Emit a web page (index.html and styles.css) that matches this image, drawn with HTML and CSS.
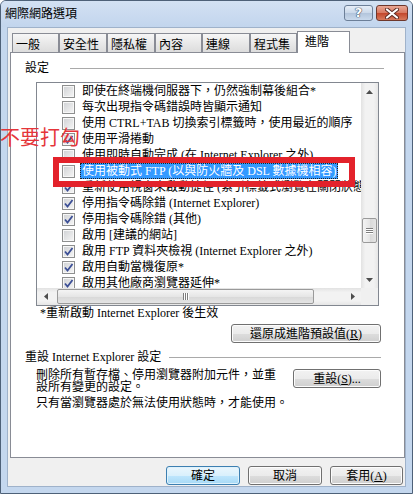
FILE: index.html
```html
<!DOCTYPE html>
<html lang="zh-Hant">
<head>
  <meta charset="UTF-8">
  <title>網際網路選項</title>
  <link rel="stylesheet" href="styles.css">
</head>
<body>

<div class="window">
  <div class="titlebar">
    <span class="title">網際網路選項</span>
    <div class="caption">
      <span class="cap help">?</span>
      <span class="cap close">
        <svg width="14" height="11" viewBox="0 0 14 11"><path d="M2 1.5 L12 9.5 M12 1.5 L2 9.5" stroke="#5a2a22" stroke-width="4" stroke-linecap="round"/><path d="M2 1.5 L12 9.5 M12 1.5 L2 9.5" stroke="#fff" stroke-width="2.2" stroke-linecap="round"/></svg>
      </span>
    </div>
  </div>

  <div class="client">
    <div class="tabs">
      <span class="tab t1">一般</span>
      <span class="tab t2">安全性</span>
      <span class="tab t3">隱私權</span>
      <span class="tab t4">內容</span>
      <span class="tab t5">連線</span>
      <span class="tab t6">程式集</span>
      <span class="tab active">進階</span>
    </div>

    <div class="panel">
      <div class="group first"><span>設定</span><i class="rule"></i></div>

      <div class="listbox">
        <div class="list-top">
          <div class="rows">
            <div class="row"><span class="cb"></span><span class="lbl">即使在終端機伺服器下，仍然強制幕後組合*</span></div>
            <div class="row"><span class="cb"></span><span class="lbl">每次出現指令碼錯誤時皆顯示通知</span></div>
            <div class="row"><span class="cb"></span><span class="lbl">使用 CTRL+TAB 切換索引標籤時，使用最近的順序</span></div>
            <div class="row"><span class="cb on"><svg width="11" height="11" viewBox="0 0 11 11"><path d="M2 5.5 L4.5 8.5 L9.5 2" fill="none" stroke="#3c4f96" stroke-width="1.8"/></svg></span><span class="lbl">使用平滑捲動</span></div>
            <div class="row"><span class="cb"></span><span class="lbl">使用即時自動完成 (在 Internet Explorer 之外)</span></div>
            <div class="row"><span class="cb"></span><span class="lbl selected">使用被動式 FTP (以與防火牆及 DSL 數據機相容)</span></div>
            <div class="row"><span class="cb on"><svg width="11" height="11" viewBox="0 0 11 11"><path d="M2 5.5 L4.5 8.5 L9.5 2" fill="none" stroke="#3c4f96" stroke-width="1.8"/></svg></span><span class="lbl">重新使用視窗來啟動捷徑 (索引標籤式瀏覽在關閉狀態時)</span></div>
            <div class="row"><span class="cb on"><svg width="11" height="11" viewBox="0 0 11 11"><path d="M2 5.5 L4.5 8.5 L9.5 2" fill="none" stroke="#3c4f96" stroke-width="1.8"/></svg></span><span class="lbl">停用指令碼除錯 (Internet Explorer)</span></div>
            <div class="row"><span class="cb on"><svg width="11" height="11" viewBox="0 0 11 11"><path d="M2 5.5 L4.5 8.5 L9.5 2" fill="none" stroke="#3c4f96" stroke-width="1.8"/></svg></span><span class="lbl">停用指令碼除錯 (其他)</span></div>
            <div class="row"><span class="cb"></span><span class="lbl">啟用 [建議的網站]</span></div>
            <div class="row"><span class="cb on"><svg width="11" height="11" viewBox="0 0 11 11"><path d="M2 5.5 L4.5 8.5 L9.5 2" fill="none" stroke="#3c4f96" stroke-width="1.8"/></svg></span><span class="lbl">啟用 FTP 資料夾檢視 (Internet Explorer 之外)</span></div>
            <div class="row"><span class="cb on"><svg width="11" height="11" viewBox="0 0 11 11"><path d="M2 5.5 L4.5 8.5 L9.5 2" fill="none" stroke="#3c4f96" stroke-width="1.8"/></svg></span><span class="lbl">啟用自動當機復原*</span></div>
            <div class="row"><span class="cb on"><svg width="11" height="11" viewBox="0 0 11 11"><path d="M2 5.5 L4.5 8.5 L9.5 2" fill="none" stroke="#3c4f96" stroke-width="1.8"/></svg></span><span class="lbl">啟用其他廠商瀏覽器延伸*</span></div>
          </div>
          <div class="vscroll">
            <span class="arrow"><svg width="7" height="4" viewBox="0 0 7 4"><path d="M0 4 L3.5 0 L7 4 Z" fill="#4d4d4d"/></svg></span>
            <div class="vtrack">
              <div class="vthumb"><i></i><i></i><i></i></div>
            </div>
            <span class="arrow"><svg width="7" height="4" viewBox="0 0 7 4"><path d="M0 0 L7 0 L3.5 4 Z" fill="#4d4d4d"/></svg></span>
          </div>
        </div>
        <div class="list-bottom">
          <div class="hscroll">
            <span class="arrow"><svg width="4" height="7" viewBox="0 0 4 7"><path d="M4 0 L4 7 L0 3.5 Z" fill="#4d4d4d"/></svg></span>
            <div class="htrack">
              <div class="hthumb"><i></i><i></i><i></i></div>
            </div>
            <span class="arrow"><svg width="4" height="7" viewBox="0 0 4 7"><path d="M0 0 L4 3.5 L0 7 Z" fill="#4d4d4d"/></svg></span>
          </div>
          <span class="corner"></span>
        </div>
      </div>

      <p class="note">*重新啟動 Internet Explorer 後生效</p>
      <div class="btn-row"><button class="btn restore">還原成進階預設值(<u>R</u>)</button></div>

      <div class="group second"><span>重設 Internet Explorer 設定</span><i class="rule"></i></div>
      <div class="reset-row">
        <p class="desc">刪除所有暫存檔、停用瀏覽器附加元件，並重<br>設所有變更的設定。</p>
        <button class="btn reset">重設(<u>S</u>)...</button>
      </div>
      <p class="hint">只有當瀏覽器處於無法使用狀態時，才能使用。</p>
    </div>

    <div class="footer">
      <button class="btn default">確定</button>
      <button class="btn">取消</button>
      <button class="btn apply">套用(<u>A</u>)</button>
    </div>
  </div>

  <div class="annot">不要打勾</div>
  <div class="redbox"></div>
</div>

</body>
</html>
```

FILE: styles.css
```css
* { box-sizing: border-box; }
body { margin: 0; background: #fff; color: #000; font: 12px/14px "Liberation Serif", "Noto Sans CJK TC", serif; }
p { margin: 0; }

.window { position: relative; width: 413px; height: 494px; border: 1px solid #4e6178; border-radius: 6px 6px 0 0; background: #c4d7ee; padding: 0 6px 6px; display: flex; flex-direction: column; }

.titlebar { height: 26px; margin: 0 -6px; padding: 0 4px 0 4px; display: flex; justify-content: space-between; align-items: flex-start; background: linear-gradient(#d3e1f3, #c2d5ed); border-radius: 5px 5px 0 0; }
.title { padding-top: 5px; font-family: "Noto Sans CJK TC", sans-serif; }
.caption { display: flex; gap: 3px; margin-top: 4px; }
.cap { height: 16px; border-radius: 3px; display: flex; align-items: center; justify-content: center; }
.help { width: 29px; border: 1px solid #6c7f98; background: linear-gradient(#e6eef8, #cbd9ea 48%, #b3c5dc 52%, #c9d9ec); color: #fff; font: bold 13px/14px "DejaVu Sans", sans-serif; text-shadow: 0 0 1px #394a63, 0 0 1px #394a63, 0 0 1px #394a63; }
.close { width: 32px; border: 1px solid #6e372c; background: linear-gradient(#e9a795, #d87a62 48%, #c3472c 52%, #d77a5c); }

.client { flex: 1; background: #f0f0f0; border: 1px solid #9fb2ca; display: flex; flex-direction: column; }

.tabs { display: flex; align-items: flex-end; height: 21px; margin-top: 3px; padding-left: 4px; }
.tab { height: 19px; padding: 3px 0 0 3px; border: 1px solid #898c95; border-bottom: none; background: linear-gradient(#f6f6f6, #e9e9e9 50%, #dcdcdc); font-family: "Noto Sans CJK TC", sans-serif; line-height: 14px; }
.t1 { width: 47px; }
.t2 { width: 48px; }
.t3 { width: 48px; }
.t4 { width: 47px; }
.t5 { width: 48px; }
.t6 { width: 47px; }
.tab.active { position: relative; z-index: 1; width: 53px; height: 22px; margin-bottom: -1px; padding: 2px 0 0 7px; background: #fff; }

.panel { height: 406px; margin-left: 2px; border: 1px solid #898c95; background: #fff; }

.group { display: flex; align-items: center; padding-left: 14px; line-height: 14px; }
.group .rule { flex: 1; height: 1px; background: #a9a9a9; }
.group.first { margin-top: 8px; }
.group.first .rule { margin: 0 20px 0 21px; }
.group.second { margin-top: 7px; }
.group.second .rule { margin: 0 23px 0 8px; }

.listbox { width: 343px; height: 224px; margin: 7px 0 0 25px; border: 1px solid #828790; display: flex; flex-direction: column; }
.list-top { display: flex; height: 205px; }
.rows { flex: 1; overflow: hidden; }
.row { display: flex; align-items: center; height: 16px; padding-left: 25px; white-space: nowrap; }
.cb { flex: none; width: 13px; height: 13px; border: 1px solid #8e8f8f; background: linear-gradient(135deg, #cfd1d4, #f6f6f6); box-shadow: inset 0 0 0 1px #f7f7f7; display: flex; align-items: center; justify-content: center; }
.lbl { flex: none; margin-left: 5px; padding: 0 2px; line-height: 16px; }
.lbl.selected { background: #3399ff; color: #fff; outline: 1px dotted #222; outline-offset: -1px; }

.vscroll { width: 17px; display: flex; flex-direction: column; background: linear-gradient(to right, #e2e2e2, #f2f2f2 25%, #f2f2f2 75%, #e6e6e6); }
.vscroll .arrow { height: 17px; display: flex; align-items: center; justify-content: center; }
.vtrack { flex: 1; }
.vthumb { width: 15px; height: 25px; margin: 118px 0 0 1px; border: 1px solid #9a9a9a; border-radius: 2px; background: linear-gradient(to right, #f4f4f4, #e6e6e6 50%, #d8d8d8 52%, #e4e4e4); display: flex; flex-direction: column; align-items: center; justify-content: center; gap: 1px; }
.vthumb i { width: 7px; height: 1px; background: #7e7e7e; box-shadow: 0 1px 0 #fff; }

.list-bottom { display: flex; height: 17px; }
.hscroll { flex: 1; display: flex; background: linear-gradient(#e2e2e2, #f2f2f2 25%, #f2f2f2 75%, #e6e6e6); }
.hscroll .arrow { width: 17px; display: flex; align-items: center; justify-content: center; }
.htrack { flex: 1; }
.hthumb { width: 257px; height: 15px; margin: 1px 0 0 3px; border: 1px solid #9a9a9a; border-radius: 2px; background: linear-gradient(#f4f4f4, #e6e6e6 50%, #d8d8d8 52%, #e4e4e4); display: flex; align-items: center; justify-content: center; gap: 1px; }
.hthumb i { width: 1px; height: 7px; background: #7e7e7e; box-shadow: 1px 0 0 #fff; }
.corner { width: 17px; background: #f0f0f0; }

.note { margin-left: 29px; }
.btn-row { display: flex; justify-content: flex-end; margin-top: 4px; padding-right: 23px; }

.btn { height: 19px; padding: 0; border: 1px solid #707070; border-radius: 3px; background: linear-gradient(#f2f2f2, #ebebeb 50%, #dddddd 51%, #cfcfcf); box-shadow: inset 0 0 0 1px #fcfcfc; font: 12px/16px "Liberation Serif", "Noto Sans CJK TC", serif; color: #000; }
.btn u { text-underline-offset: 1px; }
.restore { width: 150px; }
.reset { width: 88px; flex: none; }

.reset-row { display: flex; justify-content: space-between; align-items: flex-start; margin-top: 5px; padding: 0 23px 0 25px; }
.desc { line-height: 12px; }
.hint { margin-top: 3px; padding-left: 25px; }

.footer { display: flex; justify-content: flex-end; gap: 8px; margin-top: 8px; padding-right: 2px; }
.footer .btn { width: 74px; }
.footer .apply { width: 73px; }
.btn.default { border-color: #3c7fb1; background: linear-gradient(#eaf6fd, #d9f0fc 50%, #bee6fd 51%, #a7d9f5); box-shadow: inset 0 0 0 1px #dff2fc; }

.annot { position: absolute; left: -1px; top: 126px; color: #e5353a; font: 20px/20px "Noto Sans CJK TC", sans-serif; }
.redbox { position: absolute; left: 52px; top: 156px; width: 302px; height: 30px; border: 6px solid #e3222b; }
```
